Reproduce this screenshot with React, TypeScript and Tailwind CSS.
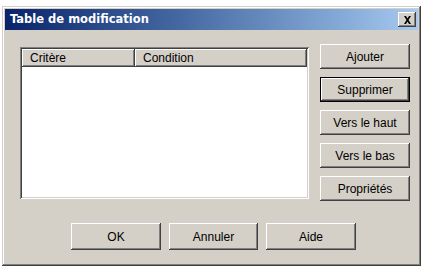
import React from "react";

const raised =
  "bg-[#d4d0c8] shadow-[inset_-1px_-1px_#404040,inset_1px_1px_#ffffff,inset_-2px_-2px_#808080,inset_2px_2px_#d4d0c8]";

interface BtnProps {
  label: string;
  primary?: boolean;
  className?: string;
}

const Btn: React.FC<BtnProps> = ({ label, primary, className }) => {
  if (primary) {
    return (
      <div className={`border border-black ${className ?? ""}`}>
        <div className={`${raised} h-full flex items-center justify-center text-[12px] text-black`}>{label}</div>
      </div>
    );
  }
  return (
    <div className={`${raised} flex items-center justify-center text-[12px] text-black ${className ?? ""}`}>
      {label}
    </div>
  );
};

export default function App() {
  return (
    <div className="w-[426px] h-[267px] bg-white pt-[6px] pl-[2px] font-['Liberation_Sans',Arial,sans-serif]">
      <div className="w-[419px] h-[260px] bg-[#d4d0c8] pt-[3px] px-[3px] shadow-[inset_-1px_-1px_#404040,inset_1px_1px_#d4d0c8,inset_-2px_-2px_#808080,inset_2px_2px_#ffffff]">
        {/* title bar */}
        <div className="h-[21px] bg-gradient-to-r from-[#0a246a] to-[#a6caf0] flex items-center justify-between pl-[5px] pr-[2px]">
          <span className="text-white font-bold text-[11.5px] font-['DejaVu_Sans',Verdana,sans-serif]">
            Table de modification
          </span>
          <div className={`${raised} w-[18px] h-[15px] flex items-center justify-center`}>
            <svg width="9" height="8" viewBox="0 0 9 8">
              <path d="M1 0h2l1.5 2.5L6 0h2L5.5 4 8 8H6L4.5 5.5 3 8H1l2.5-4z" fill="#000" />
            </svg>
          </div>
        </div>

        {/* body */}
        <div className="flex items-start pl-[15px] pt-[14px]">
          <div className="mt-[3px] w-[289px] h-[152px] bg-white shadow-[inset_1px_1px_#808080,inset_-1px_-1px_#ffffff,inset_2px_2px_#404040,inset_-2px_-2px_#d4d0c8] p-[2px]">
            <div className="flex h-[18px]">
              <div className={`${raised} w-[113px] h-full flex items-center pl-[8px] text-[12px] text-black`}>Critère</div>
              <div className={`${raised} flex-1 h-full flex items-center pl-[8px] text-[12px] text-black`}>Condition</div>
            </div>
          </div>
          <div className="ml-[11px] w-[90px] flex flex-col gap-[8px]">
            <Btn label="Ajouter" className="h-[25px]" />
            <Btn label="Supprimer" primary className="h-[25px]" />
            <Btn label="Vers le haut" className="h-[25px]" />
            <Btn label="Vers le bas" className="h-[25px]" />
            <Btn label="Propriétés" className="h-[25px]" />
          </div>
        </div>

        <div className="flex gap-[8px] pl-[66px] mt-[22px]">
          <Btn label="OK" className="w-[90px] h-[27px]" />
          <Btn label="Annuler" className="w-[89px] h-[27px]" />
          <Btn label="Aide" className="w-[90px] h-[27px]" />
        </div>
      </div>
    </div>
  );
}
